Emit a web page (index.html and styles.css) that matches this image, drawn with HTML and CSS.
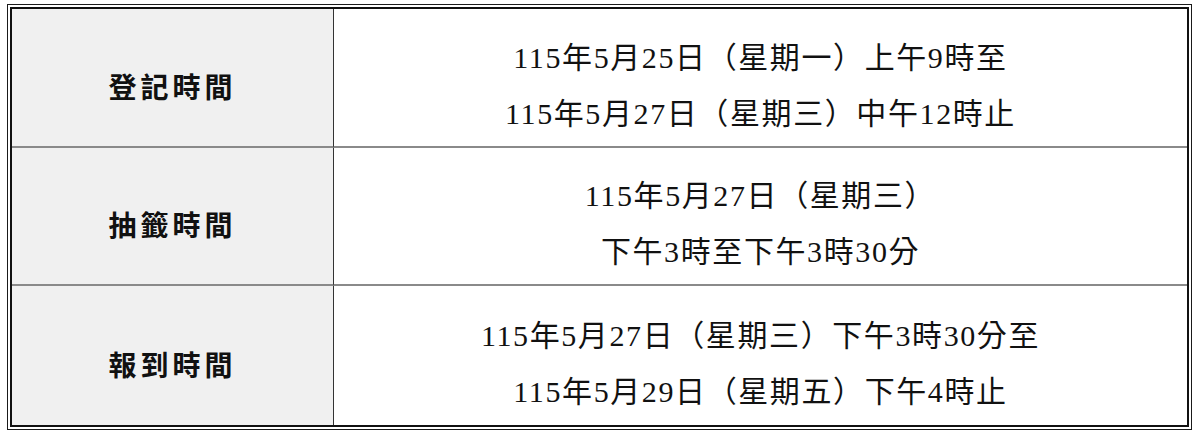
FILE: index.html
```html
<!DOCTYPE html>
<html lang="zh-Hant">
<head>
<meta charset="utf-8">
<title>時間表</title>
<link rel="stylesheet" href="styles.css">
</head>
<body>
<div class="frame">
  <div class="table">
    <div class="label">登記時間</div>
    <div class="value">
      <div class="line">115年5月25日（星期一）上午9時至</div>
      <div class="line">115年5月27日（星期三）中午12時止</div>
    </div>
    <div class="label">抽籤時間</div>
    <div class="value">
      <div class="line">115年5月27日（星期三）</div>
      <div class="line">下午3時至下午3時30分</div>
    </div>
    <div class="label last">報到時間</div>
    <div class="value last">
      <div class="line">115年5月27日（星期三）下午3時30分至</div>
      <div class="line">115年5月29日（星期五）下午4時止</div>
    </div>
  </div>
</div>
</body>
</html>
```
FILE: styles.css
```css
html, body {
  margin: 0;
  padding: 0;
  background: #ffffff;
}
body {
  padding: 4px 0 0 7px;
}
.frame {
  box-sizing: border-box;
  width: 1185px;
  height: 426px;
  border: 1px solid #1a1a1a;
  padding: 2px;
}
.table {
  box-sizing: border-box;
  height: 100%;
  border: 2px solid #111;
  display: grid;
  grid-template-columns: 322px 1fr;
  grid-template-rows: 139px 138px 1fr;
}
.label {
  background: #f0f0f0;
  border-right: 1px solid #333;
  border-bottom: 2px solid #8a8a8a;
  display: flex;
  align-items: center;
  justify-content: center;
  padding-top: 16px;
  box-sizing: border-box;
  font-family: "Noto Sans CJK TC", sans-serif;
  font-weight: 700;
  font-size: 28px;
  letter-spacing: 4px;
  color: #111;
}
.value {
  border-bottom: 2px solid #8a8a8a;
  display: flex;
  flex-direction: column;
  align-items: center;
  justify-content: center;
  padding-top: 16px;
  box-sizing: border-box;
  font-family: "Liberation Serif", "Noto Sans CJK TC", serif;
  font-size: 30px;
  letter-spacing: 1.6px;
  color: #111;
}
.line {
  line-height: 56px;
  white-space: nowrap;
}
.last {
  border-bottom: none;
}
```
